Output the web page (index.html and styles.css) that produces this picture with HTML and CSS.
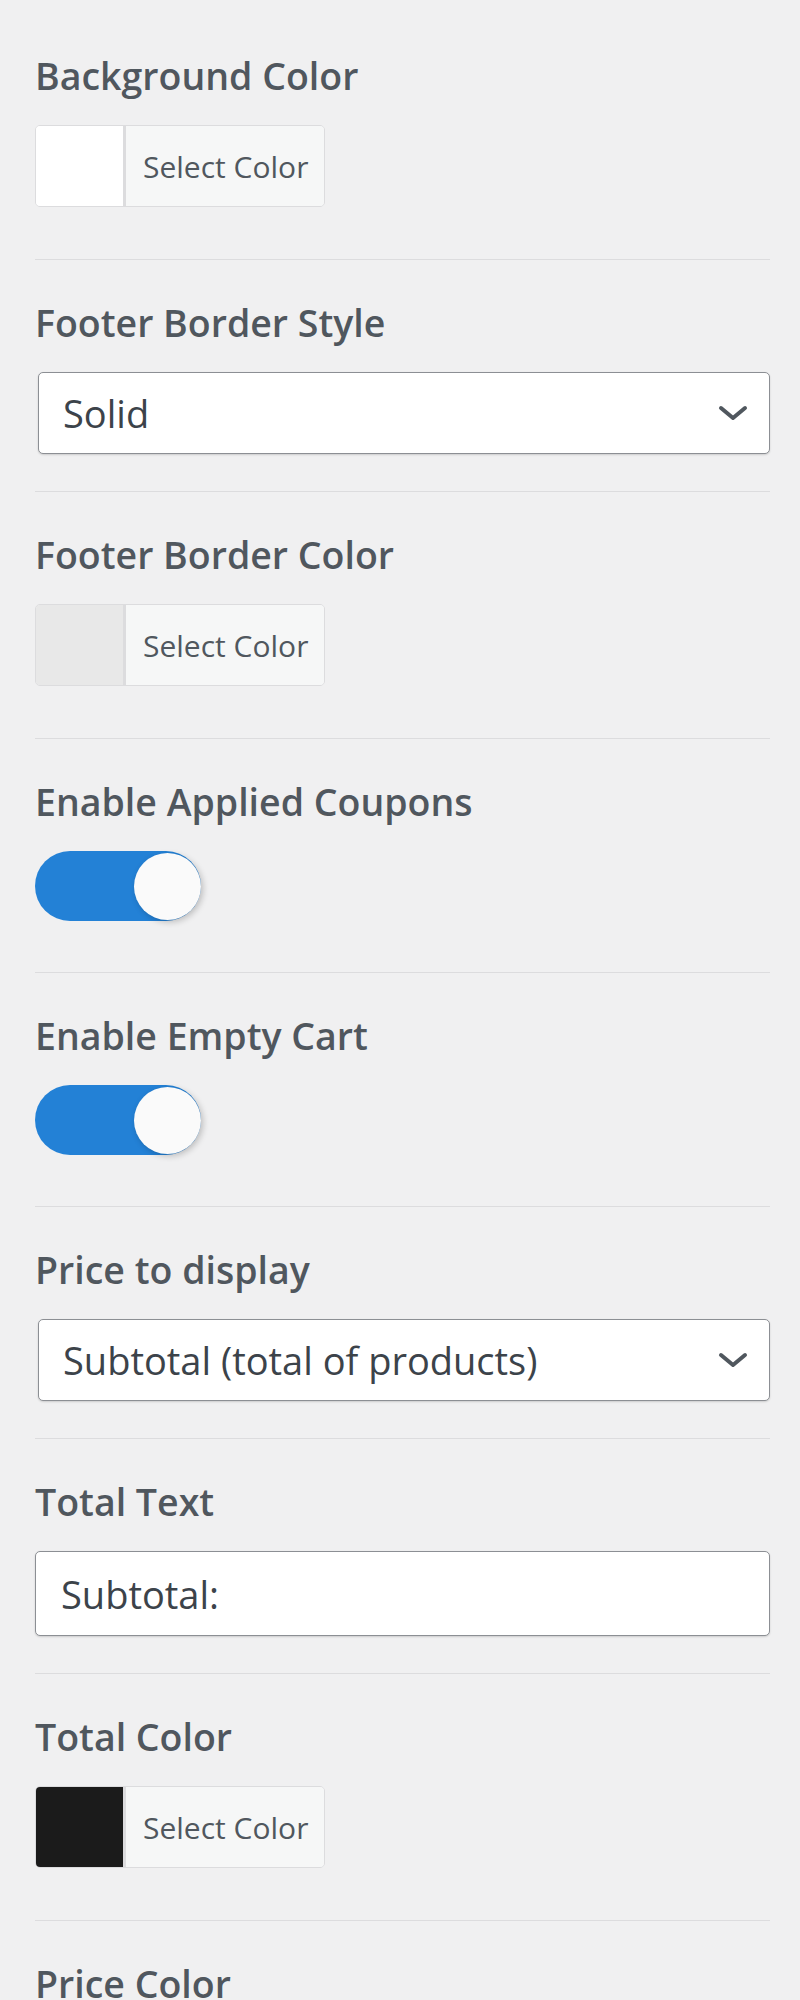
FILE: index.html
```html
<!DOCTYPE html>
<html lang="en">
<head>
    <meta charset="UTF-8">
    <meta name="viewport" content="width=device-width, initial-scale=1.0">
    <title>Cart Footer Settings</title>
    <link rel="stylesheet" href="styles.css">
</head>
<body>
    <main class="panel">
        <div class="field">
            <label class="field-label">Background Color</label>
            <div class="color-picker">
                <span class="swatch swatch-white"></span>
                <button type="button" class="picker-btn">Select Color</button>
            </div>
        </div>

        <div class="field field-input">
            <label class="field-label" for="border-style">Footer Border Style</label>
            <div class="select-wrap">
                <select id="border-style">
                    <option>Solid</option>
                    <option>Dashed</option>
                    <option>Dotted</option>
                    <option>None</option>
                </select>
                <svg class="chevron" viewBox="0 0 30 16" width="30" height="16">
                    <path d="M3 3 L15 13 L27 3" fill="none" stroke="#50575e" stroke-width="4" stroke-linecap="round" stroke-linejoin="round"/>
                </svg>
            </div>
        </div>

        <div class="field">
            <label class="field-label">Footer Border Color</label>
            <div class="color-picker">
                <span class="swatch swatch-light"></span>
                <button type="button" class="picker-btn">Select Color</button>
            </div>
        </div>

        <div class="field">
            <label class="field-label">Enable Applied Coupons</label>
            <label class="toggle">
                <input type="checkbox" checked>
                <span class="knob"></span>
            </label>
        </div>

        <div class="field">
            <label class="field-label">Enable Empty Cart</label>
            <label class="toggle">
                <input type="checkbox" checked>
                <span class="knob"></span>
            </label>
        </div>

        <div class="field field-input">
            <label class="field-label" for="price-display">Price to display</label>
            <div class="select-wrap">
                <select id="price-display">
                    <option>Subtotal (total of products)</option>
                    <option>Total</option>
                </select>
                <svg class="chevron" viewBox="0 0 30 16" width="30" height="16">
                    <path d="M3 3 L15 13 L27 3" fill="none" stroke="#50575e" stroke-width="4" stroke-linecap="round" stroke-linejoin="round"/>
                </svg>
            </div>
        </div>

        <div class="field field-input">
            <label class="field-label" for="total-text">Total Text</label>
            <input type="text" id="total-text" class="text-input" value="Subtotal:">
        </div>

        <div class="field">
            <label class="field-label">Total Color</label>
            <div class="color-picker">
                <span class="swatch swatch-dark"></span>
                <button type="button" class="picker-btn">Select Color</button>
            </div>
        </div>

        <div class="field">
            <label class="field-label">Price Color</label>
            <div class="color-picker">
                <span class="swatch swatch-dark"></span>
                <button type="button" class="picker-btn">Select Color</button>
            </div>
        </div>
    </main>
</body>
</html>
```

FILE: styles.css
```css
body {
    margin: 0;
    background: #f0f0f1;
    font-family: "Open Sans", "Noto Sans", sans-serif;
    color: #50575e;
}
.panel {
    padding: 13px 30px 0 35px;
}
.field {
    padding: 39px 0 37px;
    border-bottom: 1px solid #dcdcde;
}
.field-label {
    display: block;
    font-size: 37.5px;
    font-weight: 600;
    line-height: 48px;
    margin-bottom: 25px;
    color: #50575e;
}

/* color picker */
.color-picker {
    display: flex;
    width: 290px;
    height: 82px;
    margin-bottom: 15px;
    border: 1px solid #dcdcde;
    border-radius: 5px;
    overflow: hidden;
    box-sizing: border-box;
}
.swatch {
    width: 87px;
    border-right: 3px solid #dcdcde;
}
.swatch-white {
    background: #fff;
}
.swatch-light {
    background: #e8e8e8;
}
.swatch-dark {
    background: #1b1b1b;
}
.picker-btn {
    flex: 1;
    border: none;
    background: #f6f7f7;
    font-family: "Open Sans", "Noto Sans", sans-serif;
    font-size: 30px;
    color: #50575e;
    text-align: left;
    padding: 0 0 0 17px;
    cursor: pointer;
}

/* select + text input */
.select-wrap {
    position: relative;
    margin-left: 3px;
}
select,
.text-input {
    display: block;
    width: 100%;
    height: 82px;
    box-sizing: border-box;
    border: 1px solid #8c8f94;
    border-radius: 5px;
    background: #fff;
    font-family: "Open Sans", "Noto Sans", sans-serif;
    font-size: 38px;
    color: #3c434a;
    padding: 0 60px 0 24px;
    box-shadow: 0 1px 2px rgba(0, 0, 0, 0.15);
    appearance: none;
    -webkit-appearance: none;
    outline: none;
}
.text-input {
    padding-left: 25px;
    height: 85px;
}
.chevron {
    position: absolute;
    right: 22px;
    top: 33px;
    pointer-events: none;
}

/* toggle switch */
.toggle {
    display: block;
    position: relative;
    width: 166px;
    height: 70px;
    margin-bottom: 14px;
    border-radius: 35px;
    background: #2381d6;
    cursor: pointer;
}
.toggle input {
    display: none;
}
.knob {
    position: absolute;
    top: 2px;
    right: 0;
    width: 67px;
    height: 67px;
    border-radius: 50%;
    background: #fafafa;
    box-shadow: 2px 2px 6px rgba(0, 0, 0, 0.22);
}
```
